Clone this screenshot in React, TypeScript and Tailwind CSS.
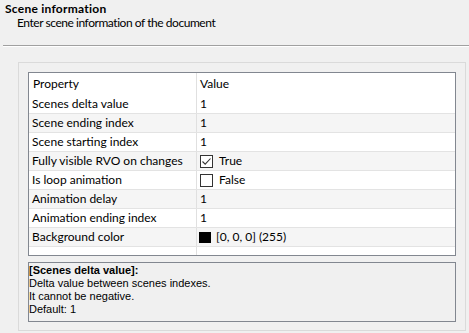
import React from "react";

const rows: { name: string; kind: "text" | "check" | "color"; value: string; checked?: boolean }[] = [
  { name: "Scenes delta value", kind: "text", value: "1" },
  { name: "Scene ending index", kind: "text", value: "1" },
  { name: "Scene starting index", kind: "text", value: "1" },
  { name: "Fully visible RVO on changes", kind: "check", value: "True", checked: true },
  { name: "Is loop animation", kind: "check", value: "False", checked: false },
  { name: "Animation delay", kind: "text", value: "1" },
  { name: "Animation ending index", kind: "text", value: "1" },
  { name: "Background color", kind: "color", value: "[0, 0, 0] (255)" },
];

function CheckBox({ checked }: { checked: boolean }) {
  return (
    <div className="w-[13px] h-[13px] border border-[#333333] bg-white flex items-center justify-center shrink-0">
      {checked && (
        <svg width="11" height="11" viewBox="0 0 11 11">
          <path d="M1.5 5.5 L4.2 8.2 L9.5 2.5" fill="none" stroke="#333333" strokeWidth="1.1" />
        </svg>
      )}
    </div>
  );
}

export default function App() {
  return (
    <div
      className="w-[469px] h-[333px] bg-[#f0f0f0] overflow-hidden text-black"
      style={{ fontFamily: 'Lato, "Noto Sans", sans-serif' }}
    >
      <div className="pt-[2px]">
        <div className="pl-[5px] text-[12px] leading-[14px] font-bold tracking-[0.25px]">Scene information</div>
        <div className="pl-[17px] text-[12px] leading-[14px] tracking-[-0.45px]">Enter scene information of the document</div>
      </div>
      <div className="mt-[15px] ml-[3px] h-[2px] border-t border-[#a0a0a0] border-b border-b-white" />
      <div className="mt-[15px] ml-[18px] w-[448px] h-[269px] border border-[#dadada] px-[9px] pt-[9px] flex flex-col">
        <div className="w-[428px] h-[184px] border border-[#828790] bg-white flex flex-col">
          <div className="h-[22px] flex text-[12px] shrink-0">
            <div className="w-[168px] border-r border-[#e0e0e0] pl-[4px] flex items-center">Property</div>
            <div className="flex-1 pl-[3px] flex items-center">Value</div>
          </div>
          {rows.map((r, i) => (
            <div
              key={r.name}
              className={`h-[19px] flex text-[12px] border-b border-[#e3e3e3] shrink-0 ${i % 2 === 1 ? "bg-[#f5f5f5]" : "bg-white"}`}
            >
              <div className="w-[168px] border-r border-[#e0e0e0] pl-[3px] flex items-center whitespace-nowrap">
                {r.name}
              </div>
              <div className="flex-1 pl-[3px] flex items-center gap-[6px] whitespace-nowrap">
                {r.kind === "check" && (
                  <>
                    <CheckBox checked={!!r.checked} />
                    <span>{r.value}</span>
                  </>
                )}
                {r.kind === "color" && (
                  <>
                    <div className="w-[12px] h-[11px] bg-black shrink-0 ml-[-1px]" />
                    <span className="ml-[-1px]">{r.value}</span>
                  </>
                )}
                {r.kind === "text" && <span>{r.value}</span>}
              </div>
            </div>
          ))}
          <div className="flex-1 flex">
            <div className="w-[168px] border-r border-[#e0e0e0]" />
          </div>
        </div>
        <div
          className="mt-[6px] w-[428px] h-[60px] border border-[#828790] bg-[#f0f0f0] pl-[0px] pt-[1px] text-[11px] leading-[13px]"
          style={{ fontFamily: '"Liberation Sans", Arial, sans-serif' }}
        >
          <div className="font-bold">[Scenes delta value]:</div>
          <div>Delta value between scenes indexes.</div>
          <div>It cannot be negative.</div>
          <div>Default: 1</div>
        </div>
      </div>
    </div>
  );
}
